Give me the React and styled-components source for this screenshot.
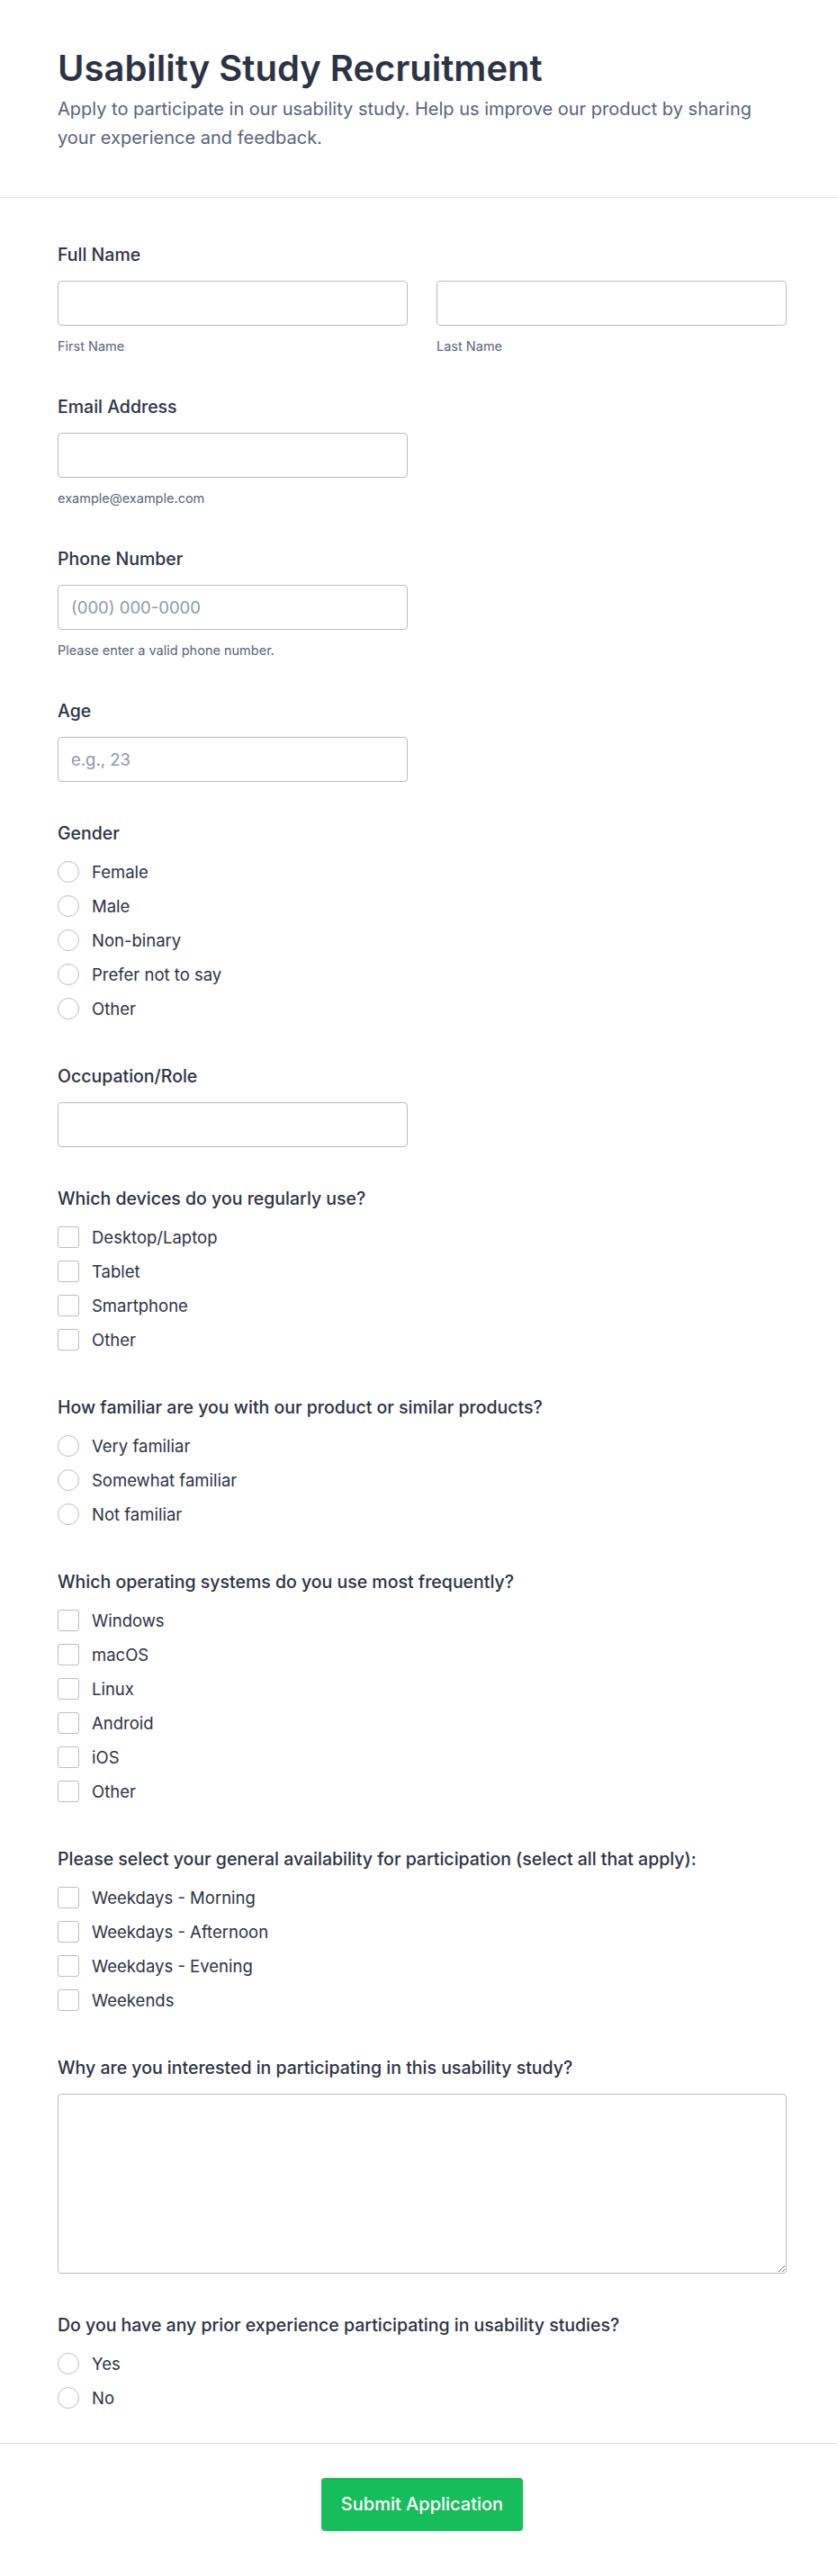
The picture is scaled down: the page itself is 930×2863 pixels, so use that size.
import React from "react";
import styled, { createGlobalStyle } from "styled-components";

const GlobalStyle = createGlobalStyle`
  * { box-sizing: border-box; }
  body {
    margin: 0;
    background: #fff;
    font-family: Inter, "Noto Sans", "Liberation Sans", sans-serif;
    color: #2c3345;
  }
`;

const genders = ["Female", "Male", "Non-binary", "Prefer not to say", "Other"];
const devices = ["Desktop/Laptop", "Tablet", "Smartphone", "Other"];
const familiarity = ["Very familiar", "Somewhat familiar", "Not familiar"];
const systems = ["Windows", "macOS", "Linux", "Android", "iOS", "Other"];
const availability = [
  "Weekdays - Morning",
  "Weekdays - Afternoon",
  "Weekdays - Evening",
  "Weekends",
];

const OptionGroup = ({ name, type, options }) => (
  <OptionList>
    {options.map((opt) => (
      <OptionRow key={opt}>
        <ChoiceBox type={type} name={name} $round={type === "radio"} />
        <span>{opt}</span>
      </OptionRow>
    ))}
  </OptionList>
);

const App = () => {
  return (
    <>
      <GlobalStyle />
      <Page>
        <Header>
          <Title>Usability Study Recruitment</Title>
          <Subtitle>
            Apply to participate in our usability study. Help us improve our
            product by sharing your experience and feedback.
          </Subtitle>
        </Header>

        <FormBody>
          <Field>
            <Label>Full Name</Label>
            <NameRow>
              <div>
                <TextInput type="text" />
                <SubLabel>First Name</SubLabel>
              </div>
              <div>
                <TextInput type="text" />
                <SubLabel>Last Name</SubLabel>
              </div>
            </NameRow>
          </Field>

          <Field>
            <Label>Email Address</Label>
            <TextInput type="email" $half />
            <SubLabel>example@example.com</SubLabel>
          </Field>

          <Field>
            <Label>Phone Number</Label>
            <TextInput type="tel" placeholder="(000) 000-0000" $half />
            <SubLabel>Please enter a valid phone number.</SubLabel>
          </Field>

          <Field>
            <Label>Age</Label>
            <TextInput type="text" placeholder="e.g., 23" $half />
          </Field>

          <Field>
            <Label>Gender</Label>
            <OptionGroup name="gender" type="radio" options={genders} />
          </Field>

          <Field>
            <Label>Occupation/Role</Label>
            <TextInput type="text" $half />
          </Field>

          <Field>
            <Label>Which devices do you regularly use?</Label>
            <OptionGroup name="devices" type="checkbox" options={devices} />
          </Field>

          <Field>
            <Label>How familiar are you with our product or similar products?</Label>
            <OptionGroup name="familiar" type="radio" options={familiarity} />
          </Field>

          <Field>
            <Label>Which operating systems do you use most frequently?</Label>
            <OptionGroup name="os" type="checkbox" options={systems} />
          </Field>

          <Field>
            <Label>
              Please select your general availability for participation (select
              all that apply):
            </Label>
            <OptionGroup name="avail" type="checkbox" options={availability} />
          </Field>

          <Field>
            <Label>Why are you interested in participating in this usability study?</Label>
            <TextArea />
          </Field>

          <Field>
            <Label>Do you have any prior experience participating in usability studies?</Label>
            <OptionGroup name="prior" type="radio" options={["Yes", "No"]} />
          </Field>
        </FormBody>

        <Footer>
          <SubmitButton type="button">Submit Application</SubmitButton>
        </Footer>
      </Page>
    </>
  );
};

const Page = styled.div`
  width: 100%;
  background: #fff;
`;

const Header = styled.header`
  padding: 52px 56px 50px 64px;
  border-bottom: 1px solid #e3e5ee;
`;

const Title = styled.h1`
  margin: 0;
  font-size: 40px;
  line-height: 48px;
  font-weight: 600;
  color: #2c3345;
`;

const Subtitle = styled.p`
  margin: 5px 0 0;
  font-size: 20px;
  line-height: 32px;
  color: #57647e;
`;

const FormBody = styled.div`
  display: flex;
  flex-direction: column;
  gap: 44px;
  padding: 50px 56px 32px 64px;
`;

const Field = styled.div`
  display: flex;
  flex-direction: column;
`;

const Label = styled.label`
  font-size: 19.5px;
  line-height: 27px;
  font-weight: 500;
  color: #2c3345;
  margin-bottom: 15px;
`;

const NameRow = styled.div`
  display: grid;
  grid-template-columns: 1fr 1fr;
  column-gap: 32px;
`;

const TextInput = styled.input`
  display: block;
  width: ${(p) => (p.$half ? "calc(50% - 16px)" : "100%")};
  height: 50px;
  padding: 0 14px;
  border: 1px solid #b8bdc9;
  border-radius: 4px;
  background: #fff;
  font-family: inherit;
  font-size: 18.5px;
  color: #2c3345;
  outline: none;

  &::placeholder {
    color: #8f98aa;
  }
`;

const SubLabel = styled.div`
  margin-top: 12px;
  font-size: 14.5px;
  line-height: 21px;
  color: #57647e;
`;

const OptionList = styled.div`
  display: flex;
  flex-direction: column;
  gap: 11px;
  padding-bottom: 5px;
`;

const OptionRow = styled.label`
  display: flex;
  align-items: center;
  gap: 14px;
  height: 27px;
  font-size: 18.5px;
  color: #2c3345;
`;

const ChoiceBox = styled.input`
  appearance: none;
  -webkit-appearance: none;
  flex: none;
  width: 24px;
  height: 24px;
  margin: 0;
  border: 1.5px solid #b8bdc9;
  border-radius: ${(p) => (p.$round ? "50%" : "3px")};
  background: #fff;
`;

const TextArea = styled.textarea`
  display: block;
  width: 100%;
  height: 200px;
  padding: 12px 14px;
  border: 1px solid #b8bdc9;
  border-radius: 4px;
  font-family: inherit;
  font-size: 18px;
  outline: none;
`;

const Footer = styled.footer`
  display: flex;
  justify-content: center;
  padding: 38px 56px 50px 64px;
  border-top: 1px solid #e3e5ee;
`;

const SubmitButton = styled.button`
  padding: 16px 22px;
  border: none;
  border-radius: 4px;
  background: #18bd5b;
  color: #fff;
  font-family: inherit;
  font-size: 20px;
  line-height: 27px;
  font-weight: 500;
  cursor: pointer;
`;

export default App;
